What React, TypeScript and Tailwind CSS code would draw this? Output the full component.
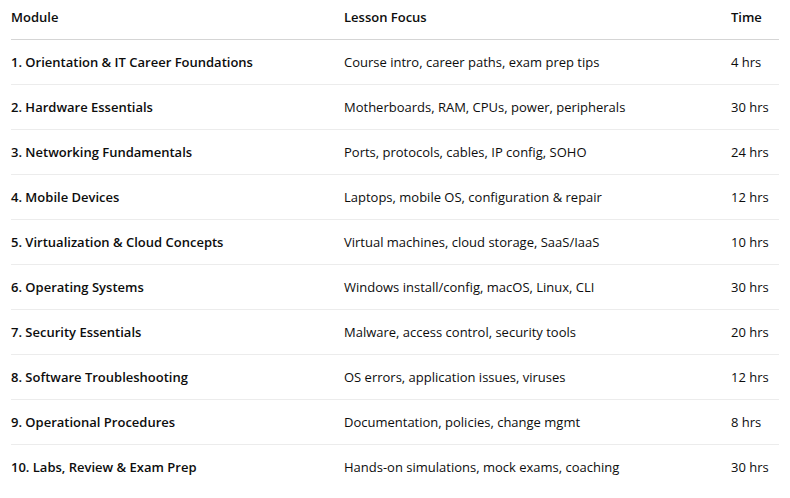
const rows = [
  ["1. Orientation & IT Career Foundations", "Course intro, career paths, exam prep tips", "4 hrs"],
  ["2. Hardware Essentials", "Motherboards, RAM, CPUs, power, peripherals", "30 hrs"],
  ["3. Networking Fundamentals", "Ports, protocols, cables, IP config, SOHO", "24 hrs"],
  ["4. Mobile Devices", "Laptops, mobile OS, configuration & repair", "12 hrs"],
  ["5. Virtualization & Cloud Concepts", "Virtual machines, cloud storage, SaaS/IaaS", "10 hrs"],
  ["6. Operating Systems", "Windows install/config, macOS, Linux, CLI", "30 hrs"],
  ["7. Security Essentials", "Malware, access control, security tools", "20 hrs"],
  ["8. Software Troubleshooting", "OS errors, application issues, viruses", "12 hrs"],
  ["9. Operational Procedures", "Documentation, policies, change mgmt", "8 hrs"],
  ["10. Labs, Review & Exam Prep", "Hands-on simulations, mock exams, coaching", "30 hrs"],
];

export default function App() {
  return (
    <div className="w-[790px] h-[498px] bg-white px-[11px] font-['Open_Sans',sans-serif] text-[13px] text-[#0d0d0d]">
      <table className="w-[768px] table-fixed border-collapse">
        <colgroup>
          <col className="w-[333px]" />
          <col className="w-[387px]" />
          <col className="w-[48px]" />
        </colgroup>
        <thead>
          <tr className="border-b border-[#d5d5d5]">
            <th className="h-[39px] pb-[4px] text-left font-semibold">Module</th>
            <th className="h-[39px] pb-[4px] text-left font-semibold">Lesson Focus</th>
            <th className="h-[39px] pb-[4px] text-left font-semibold">Time</th>
          </tr>
        </thead>
        <tbody>
          {rows.map((r, i) => (
            <tr key={i} className={i < rows.length - 1 ? "border-b border-[#ececec]" : ""}>
              <td className="h-[45px] pt-[2px] font-semibold">{r[0]}</td>
              <td className="h-[45px] pt-[2px]">{r[1]}</td>
              <td className="h-[45px] pt-[2px] whitespace-nowrap">{r[2]}</td>
            </tr>
          ))}
        </tbody>
      </table>
    </div>
  );
}
